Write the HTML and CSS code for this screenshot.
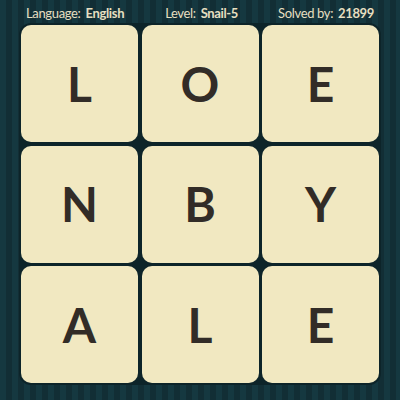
FILE: index.html
```html
<!DOCTYPE html>
<html>
<head>
<meta charset="utf-8">
<link rel="stylesheet" href="styles.css">
</head>
<body>
<div class="page">
  <div class="header">
    <span class="item lang">Language: <b>English</b></span>
    <span class="item level">Level: <b>Snail-5</b></span>
    <span class="item solved">Solved by: <b>21899</b></span>
  </div>
  <div class="board">
    <div class="tile">L</div>
    <div class="tile">O</div>
    <div class="tile">E</div>
    <div class="tile">N</div>
    <div class="tile">B</div>
    <div class="tile">Y</div>
    <div class="tile">A</div>
    <div class="tile">L</div>
    <div class="tile">E</div>
  </div>
</div>
</body>
</html>
```

FILE: styles.css
```css
html, body {
  margin: 0;
  padding: 0;
}
body {
  width: 400px;
  height: 400px;
  overflow: hidden;
  background-color: #143239;
  background-image: repeating-linear-gradient(90deg,
    #153840 0px, #153840 6px,
    #122e35 6px, #122e35 12px);
  font-family: "Lato", "Liberation Sans", sans-serif;
}
.page {
  display: flex;
  flex-direction: column;
}
.header {
  height: 25px;
  display: flex;
  align-items: center;
  color: #e6dfc0;
  font-size: 13px;
  letter-spacing: -0.35px;
}
.header b {
  font-weight: 700;
  margin-left: 2px;
}
.lang { margin-left: 26px; }
.level { margin-left: 41px; }
.solved { margin-left: auto; margin-right: 26px; }
.board {
  margin-left: 21px;
  width: 358px;
  display: grid;
  grid-template-columns: repeat(3, 117px);
  grid-auto-rows: 117px;
  gap: 3.5px;
  background: #0d2429;
  box-shadow: 0 0 0 2px #0d2429;
  border-radius: 10px;
}
.tile {
  background: #f1e8c1;
  border-radius: 10px;
  display: flex;
  align-items: center;
  justify-content: center;
  color: #322c27;
  font-family: "Lato", "Liberation Sans", sans-serif;
  font-weight: 700;
  font-size: 48px;
  line-height: 1;
}
```
